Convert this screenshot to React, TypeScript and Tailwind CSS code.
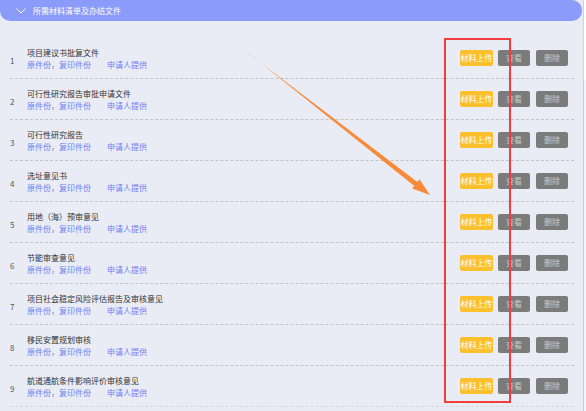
import React from "react";

const rows = [
  "项目建议书批复文件",
  "可行性研究报告审批申请文件",
  "可行性研究报告",
  "选址意见书",
  "用地（海）预审意见",
  "节能审查意见",
  "项目社会稳定风险评估报告及审核意见",
  "移民安置规划审核",
  "航道通航条件影响评价审核意见",
];

export default function App() {
  return (
    <div
      className="relative flex w-[586px] h-[411px] overflow-hidden bg-[#e9ecf5]"
      style={{ fontFamily: '"Noto Sans CJK SC", "Noto Sans", sans-serif' }}
    >
      <div className="flex flex-col w-[583px]">
        <div className="flex items-center h-[21px] mr-[1px] rounded-bl-[10px] rounded-r-[10px] bg-[#8a9bf9] pl-[16px]">
          <svg width="10" height="6" viewBox="0 0 10 6" className="mr-[7px]">
            <path d="M0.5 0.5 L5 5 L9.5 0.5" fill="none" stroke="#ffffff" strokeWidth="1" />
          </svg>
          <span className="text-[8px] leading-none text-white">所需材料清单及办结文件</span>
        </div>
        <div className="flex flex-col pt-[17px] ml-[10px] w-[564px]">
          {rows.map((t, i) => (
            <div
              key={i}
              className={`flex items-center h-[41px] border-b border-dashed ${i === rows.length - 1 ? "border-[#d6d8dd]" : "border-[#c4c4c4]"}`}
            >
              <div className="w-[17px] text-[8px] text-[#555] pt-[6px]">{i + 1}</div>
              <div className="flex flex-col flex-1 gap-[1px]">
                <div className="text-[8px] leading-[11px] text-[#333]">{t}</div>
                <div className="flex text-[8px] leading-[11px] text-[#6d7ff2]">
                  <span className="w-[80px]">原件份，复印件份</span>
                  <span>申请人提供</span>
                </div>
              </div>
              <div className="flex items-center gap-[5px] pr-[6px]">
                <div className="flex items-center justify-center w-[33px] h-[16px] rounded-[2px] bg-[#fcc02c] text-[8px] text-white whitespace-nowrap">
                  材料上传
                </div>
                <div className="flex items-center justify-center w-[32px] h-[16px] rounded-[2px] bg-[#7b7b7b] text-[8px] text-[#c9c9c9]">
                  查看
                </div>
                <div className="flex items-center justify-center w-[32px] h-[16px] rounded-[2px] ml-[1px] bg-[#7b7b7b] text-[8px] text-[#c9c9c9]">
                  删除
                </div>
              </div>
            </div>
          ))}
        </div>
      </div>
      <div className="flex flex-col w-[3px]">
        <div className="h-[80px] border-l border-[#f3c9a6] bg-white" />
        <div className="flex-1 border-l border-[#c3c9f5] bg-[#f4f5fc]" />
      </div>

      <div className="absolute left-[444px] top-[38px] w-[67px] h-[365px] border-2 border-[#f53c3c]" />

      <svg className="absolute left-0 top-0" width="586" height="411" viewBox="0 0 586 411">
        <polygon
          points="248,52.7 248.3,53.3 417.4,181.9 419.5,179.2 430,195 412.1,188.6 414.3,185.9"
          fill="#f78b3a"
        />
      </svg>
    </div>
  );
}
